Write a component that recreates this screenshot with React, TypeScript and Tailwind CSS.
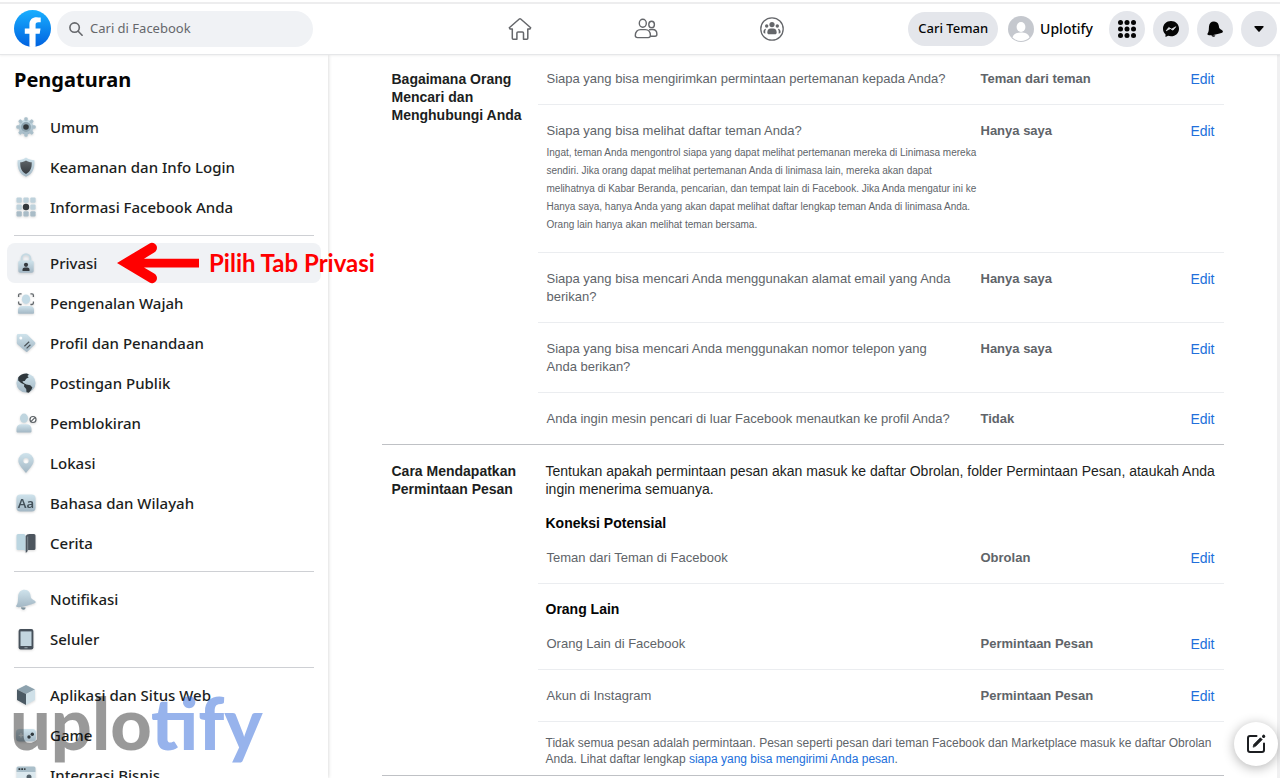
import React from "react";
import type { ReactNode } from "react";

const sans = "font-['Noto_Sans','Open_Sans',sans-serif]";

function Gradients() {
  return (
    <svg width="0" height="0" className="absolute" aria-hidden="true">
      <defs>
        <linearGradient id="fb" x1="0" y1="0" x2="0" y2="1">
          <stop offset="0" stopColor="#19afff" />
          <stop offset="1" stopColor="#0062e0" />
        </linearGradient>
        <linearGradient id="pale" x1="0" y1="0" x2="0" y2="1">
          <stop offset="0" stopColor="#cfe3ec" />
          <stop offset="1" stopColor="#a3b7c4" />
        </linearGradient>
        <linearGradient id="dark" x1="0" y1="0" x2="0" y2="1">
          <stop offset="0" stopColor="#5e6468" />
          <stop offset="1" stopColor="#353a3f" />
        </linearGradient>
      </defs>
    </svg>
  );
}

const icons: Record<string, ReactNode> = {
  gear: (
    <>
      <g fill="url(#pale)">
        <circle cx="10" cy="10" r="7.6" />
        {[0, 45, 90, 135, 180, 225, 270, 315].map((a) => (
          <rect key={a} x="8.3" y="0.3" width="3.4" height="4" rx="1.2" transform={`rotate(${a} 10 10)`} fill="#aabfca" />
        ))}
      </g>
      <circle cx="10" cy="10" r="5" fill="#8fa5b1" />
      <circle cx="10" cy="10" r="2.8" fill="#33383c" />
    </>
  ),
  shield: (
    <>
      <path d="M10 .4C7.500 2.200 4.500 3 1.600 3.200c-.5 8.300 1.600 13.600 8.400 16.600 6.800-3 8.900-8.300 8.400-16.600C15.500 3 12.500 2.200 10 .4z" fill="url(#pale)" />
      <path d="M10 3.400C8.200 4.700 6.400 5.100 4.300 5.300 4 11 5.500 14.600 10 17c4.500-2.400 6-6 5.700-11.700-2.100-.2-3.900-.6-5.700-1.900z" fill="url(#dark)" />
    </>
  ),
  grid: (
    <>
      {[0.5, 7.4, 14.3].map((y) =>
        [0.5, 7.4, 14.3].map((x) => <rect key={`${x}-${y}`} x={x} y={y} width="5.3" height="5.3" rx="1" fill={y > 10 ? "#a9bcc7" : "#bed2dc"} />)
      )}
      <circle cx="10" cy="10" r="3.200" fill="#34393d" />
    </>
  ),
  lock: (
    <>
      <path d="M5.700 9V5.500a4.300 4.300 0 0 1 8.600 0V9" fill="none" stroke="#c5d9e2" strokeWidth="2" />
      <rect x="2.300" y="7.500" width="15.400" height="12.200" rx="1.800" fill="url(#pale)" />
      <circle cx="10" cy="11.800" r="2.100" fill="#353a3f" />
      <path d="M6.500 18v-1.300c0-1.600 1-2.300 2.400-2.300h2.200c1.400 0 2.400.7 2.400 2.300V18z" fill="#353a3f" />
    </>
  ),
  face: (
    <>
      <path d="M2.600 4V2.200Q2.600.8 4 .8h1.600M14.400.8H16q1.400 0 1.400 1.400V4M2.600 8.500v1.600q0 1.400 1.400 1.400h1.600M14.400 11.500H16q1.400 0 1.400-1.400V8.500" fill="none" stroke="#63686c" strokeWidth="1.300" />
      <ellipse cx="10" cy="6.200" rx="4.100" ry="4.800" fill="#c4dbe6" />
      <path d="M2 20v-3c0-3 2-4 4.600-4h6.800c2.600 0 4.600 1 4.600 4v3q0 .8-.8.800H2.800Q2 20.800 2 20z" fill="url(#pale)" />
    </>
  ),
  tag: (
    <>
      <path d="M.8 2.400Q.8 1 2.200 1h7.600q1 0 1.700.7l7.300 7.300q1.200 1.200 0 2.400l-6.900 6.900q-1.200 1.200-2.400 0L1.600 11.500Q.8 10.800.8 9.700z" fill="url(#pale)" />
      <circle cx="4.800" cy="5" r="1.500" fill="#fff" />
      <path d="M8.400 13.300l4.800-4.500M10.600 15.400l3.800-3.600" stroke="#4b5359" strokeWidth="1.200" />
    </>
  ),
  globe: (
    <>
      <circle cx="10" cy="10" r="9.600" fill="url(#pale)" />
      <path d="M2.200 4.400C4.200 1.500 7.400.3 11 .5l2 1.300-1.700 1.300 1.500 1.200-2.600 1.400-1.500 2.200-2.300.4 1.200 1.700 2.800 1.400 3.900.9 2.100 2.300-1.200 2.500-2.300 2.700-2.400-.6-.3-3.300-2.200-2.300.3-2-3.200-1.600L2.200 7.600z" fill="#30383d" />
    </>
  ),
  block: (
    <>
      <ellipse cx="8" cy="5.200" rx="4" ry="4.600" fill="#bfd5df" />
      <path d="M.5 18.500V16c0-3.300 2-4.800 4.700-4.800h5.600c2.700 0 4.700 1.500 4.700 4.800v2.500q0 .9-.9.900H1.400q-.9 0-.9-.9z" fill="url(#pale)" />
      <circle cx="17" cy="6.500" r="3" fill="#fff" stroke="#5c6266" strokeWidth="1.200" />
      <path d="M14.900 8.600l4.200-4.200" stroke="#5c6266" strokeWidth="1.200" />
    </>
  ),
  pin: (
    <path fillRule="evenodd" d="M10 20C7.500 16.500 2.300 12 2.300 7.700a7.700 7.700 0 0 1 15.400 0C17.700 12 12.500 16.500 10 20zM10 5.100a2.700 2.700 0 1 0 0 5.400 2.700 2.700 0 0 0 0-5.400z" fill="url(#pale)" />
  ),
  aa: (
    <>
      <rect x=".4" y="1.500" width="19.200" height="17" rx="4" fill="url(#pale)" />
      <text x="10" y="14.500" textAnchor="middle" fontSize="13" fontFamily="Noto Sans" fontWeight="600" fill="#43515a">Aa</text>
    </>
  ),
  book: (
    <>
      <path d="M.5 2.500Q.5 1 2 1h5.500Q9.500 1 9.700 3v15.500Q9 17 7.500 17H2Q.5 17 .5 15.500z" fill="#bcd6e1" />
      <path d="M19.500 2.500Q19.500 1 18 1h-4.500Q10.500 1 9.700 3v16.800q1.800-.3 2.100-2.800H18q1.500 0 1.500-1.500z" fill="#4c555e" />
      <path d="M11.700 3.500V17" stroke="#7d878f" strokeWidth="1" />
    </>
  ),
  bell: (
    <>
      <path d="M5 18.200a2.300 2.300 0 0 0 4.700.3z" fill="#7e929d" />
      <path d="M1 18.100c-1.200-.6-1-1.700 0-2.700 1.300-2.300.8-5.500 1.200-8.900C2.700 3 5.200.6 8.600.7c4 .1 5.900 3 6 6.400.1 2.300 1.500 3.300 3.700 4.300 1.900.9 1.700 2.400.3 2.900C14 15.800 6 18.800 1 18.100z" fill="url(#pale)" />
    </>
  ),
  phone: (
    <>
      <rect x="2.600" y="0" width="14.800" height="20.500" rx="2" fill="#46505a" />
      <rect x="4.500" y="2.400" width="11" height="14.600" fill="#c2d5df" />
      <rect x="8.300" y="18.200" width="3.400" height="1" rx=".5" fill="#9aa7af" />
    </>
  ),
  cube: (
    <>
      <path d="M10 0l9 4.500L10 9 1 4.500z" fill="#8da2ae" />
      <path d="M1 4.500L10 9v11l-9-5z" fill="#4b5a64" />
      <path d="M19 4.500L10 9v11l9-5z" fill="#cfe0e8" />
    </>
  ),
  game: (
    <>
      <rect x="0" y="4" width="20" height="12.500" rx="3.500" fill="url(#pale)" />
      <path d="M5 8v4.600M2.700 10.300h4.600" stroke="#e9f2f6" strokeWidth="1.300" />
      <circle cx="13" cy="12" r="1.700" fill="#30383d" />
      <circle cx="16.300" cy="9.200" r="1.700" fill="#30383d" />
    </>
  ),
  browser: (
    <>
      <path d="M.5 3Q.5 1.500 2 1.500h16q1.500 0 1.500 1.500v4H.5z" fill="#aabfca" />
      <rect x=".5" y="7" width="19" height="12" fill="#dbe8ee" />
      <path d="M2.500 4.200h7" stroke="#30383d" strokeWidth="1.800" strokeDasharray="1.800 1" />
      <circle cx="13" cy="12" r="2.500" fill="#53616a" />
    </>
  ),
};

const groups: { icon: string; label: string; active?: boolean }[][] = [
  [
    { icon: "gear", label: "Umum" },
    { icon: "shield", label: "Keamanan dan Info Login" },
    { icon: "grid", label: "Informasi Facebook Anda" },
  ],
  [
    { icon: "lock", label: "Privasi", active: true },
    { icon: "face", label: "Pengenalan Wajah" },
    { icon: "tag", label: "Profil dan Penandaan" },
    { icon: "globe", label: "Postingan Publik" },
    { icon: "block", label: "Pemblokiran" },
    { icon: "pin", label: "Lokasi" },
    { icon: "aa", label: "Bahasa dan Wilayah" },
    { icon: "book", label: "Cerita" },
  ],
  [
    { icon: "bell", label: "Notifikasi" },
    { icon: "phone", label: "Seluler" },
  ],
  [
    { icon: "cube", label: "Aplikasi dan Situs Web" },
    { icon: "game", label: "Game" },
    { icon: "browser", label: "Integrasi Bisnis" },
  ],
];

function RoundButton({ label, children }: { label: string; children: ReactNode }) {
  return (
    <button aria-label={label} className="flex size-9 items-center justify-center rounded-full bg-[#e4e6eb] text-[#050505]">
      {children}
    </button>
  );
}

function Header() {
  return (
    <header className={`relative z-10 flex h-[55px] shrink-0 items-center justify-between border-b border-[#e6e7e9] bg-white pt-[3px] shadow-[0_1px_2px_rgba(0,0,0,0.06)] ${sans}`}>
      <div className="absolute inset-x-0 top-0.5 h-0.5 bg-[#ededee]" />
      <div className="flex flex-1 items-center gap-1.5 pl-3.5">
        <a href="#beranda" aria-label="Facebook">
          <svg width="37" height="37" viewBox="0 0 36 36">
            <circle cx="18" cy="18" r="18" fill="url(#fb)" />
            <path d="M25 23l.8-5H21v-3.500c0-1.400.5-2.500 2.700-2.500H26V7.400C24.700 7.200 23.300 7 22 7c-4.100 0-7 2.500-7 7v4h-4.500v5H15v12.700c1 .2 2 .3 3 .3s2-.1 3-.3V23z" fill="#fff" />
          </svg>
        </a>
        <label className="flex h-9 w-64 items-center gap-[7px] rounded-full bg-[#f0f2f5] px-3 text-[#65676b]">
          <svg width="14" height="14" viewBox="0 0 14 14" fill="none" stroke="#65676b" strokeWidth="1.600" strokeLinecap="round">
            <circle cx="5.600" cy="5.600" r="4.700" />
            <path d="M9.200 9.200l3.900 4" />
          </svg>
          <input aria-label="Cari di Facebook" placeholder="Cari di Facebook" className="min-w-0 flex-1 bg-transparent text-[13px] outline-none placeholder:text-[#65676b]" />
        </label>
      </div>
      <nav className="flex items-center gap-[102px]" aria-label="Utama">
        <a href="#beranda" aria-label="Beranda">
          <svg width="24" height="24" viewBox="0 0 24 24" fill="none" stroke="#65676b" strokeWidth="1.500" strokeLinejoin="round">
            <path d="M11.300 2q.7-.6 1.400 0l10 8.700-.8 1.300h-2.100v9.200q0 1-1 1h-3.300V16q0-1.100-1.100-1.100H10Q8.900 14.900 8.900 16v6.200H5.300q-1 0-1-1V12H2.100l-.8-1.300z" />
          </svg>
        </a>
        <a href="#teman" aria-label="Teman">
          <svg width="24" height="24" viewBox="0 0 24 24" fill="none" stroke="#65676b" strokeWidth="1.400">
            <ellipse cx="8.800" cy="6.200" rx="3.500" ry="4" />
            <path d="M1.300 18.500c0-3.700 2-5.900 5.300-5.900h4.600c3.300 0 5.200 2.200 5.200 5.900 0 1.400-.8 2.100-2.200 2.100H3.500c-1.400 0-2.200-.7-2.200-2.100z" />
            <ellipse cx="17.600" cy="7.400" rx="2.800" ry="3.200" />
            <path d="M15 12.900q1-.4 2.400-.4h1.200c2.800 0 4.300 1.800 4.300 4.800 0 1.300-.7 2-1.900 2h-4.500" />
          </svg>
        </a>
        <a href="#grup" aria-label="Grup">
          <svg width="24" height="24" viewBox="0 0 24 24" fill="#65676b">
            <circle cx="12" cy="12" r="11.200" fill="none" stroke="#65676b" strokeWidth="1.300" />
            <circle cx="12" cy="7.600" r="2.600" />
            <circle cx="6.700" cy="9" r="1.700" />
            <circle cx="17.300" cy="9" r="1.700" />
            <path d="M7.300 15.500c0-2.700 1.400-4 3.400-4h2.600c2 0 3.400 1.300 3.400 4 0 1.200-.6 1.800-1.700 1.800H9c-1.100 0-1.700-.6-1.700-1.800z" />
            <path d="M6.200 11.800c-1.900.2-2.800 1.400-2.800 3.200 0 .8.500 1.400 1.500 1.400h.5c-.4-1.700 0-3.500.8-4.600zM17.800 11.800c1.900.2 2.800 1.400 2.800 3.200 0 .8-.5 1.400-1.500 1.400h-.5c.4-1.700 0-3.500-.8-4.600z" />
          </svg>
        </a>
      </nav>
      <div className="flex flex-1 items-center justify-end gap-2 pr-[3px] font-medium text-[#050505]">
        <button className="h-[34px] rounded-full bg-[#e4e6eb] px-2.5 text-[13px]">Cari Teman</button>
        <a href="#profil" className="mr-2 ml-0.5 flex items-center gap-1.5 text-[14px]">
          <svg width="26" height="26" viewBox="0 0 26 26">
            <circle cx="13" cy="13" r="13" fill="#c5c8ce" />
            <ellipse cx="13" cy="11" rx="4.400" ry="5" fill="#fff" />
            <path d="M4.500 21.500c1-4 4.500-5 8.500-5s7.500 1 8.500 5A12.500 12.500 0 0 1 13 25a12.500 12.500 0 0 1-8.500-3.500z" fill="#fff" />
          </svg>
          Uplotify
        </a>
        <RoundButton label="Menu">
          <svg width="18" height="18" viewBox="0 0 18 18" fill="currentColor">
            {[2.500, 9, 15.500].map((y) => [2.500, 9, 15.500].map((x) => <circle key={`${x}-${y}`} cx={x} cy={y} r="2.500" />))}
          </svg>
        </RoundButton>
        <RoundButton label="Messenger">
          <svg width="18" height="18" viewBox="0 0 18 18">
            <path d="M9 1C4.400 1 1 4.300 1 8.700c0 2.300 1 4.200 2.500 5.600V17l2.600-1.200c.9.300 1.900.5 2.900.5 4.600 0 8-3.200 8-7.600S13.600 1 9 1z" fill="currentColor" />
            <path d="M4.200 10.800l2.600-3.400 2.600 1.800 4.400-2.500-2.800 3.500-2.500-1.700z" fill="#e4e6eb" stroke="#e4e6eb" strokeWidth=".7" strokeLinejoin="round" />
          </svg>
        </RoundButton>
        <RoundButton label="Notifikasi">
          <svg width="16" height="16" viewBox="0 0 20 20" fill="currentColor">
            <path d="M5.500 17.500a2.600 2.600 0 0 0 5 .6z" />
            <path d="M1.300 17.600c-1.200-.6-1-2 0-3 1.300-2.300.8-4.700 1.200-8.100C3 2.800 5.200.4 8.800.5c4 .1 6 3 6.100 6.400.1 2.300 1.300 3.300 3.500 4.300 1.900.9 1.900 3.100.4 3.600C14.500 16.300 6.300 18.600 1.300 17.600z" />
          </svg>
        </RoundButton>
        <RoundButton label="Akun">
          <svg width="10" height="6" viewBox="0 0 10 6" fill="currentColor">
            <path d="M1 0h8q1 0 .6.900L5.600 5.600q-.6.700-1.200 0L.4.900Q0 0 1 0z" />
          </svg>
        </RoundButton>
      </div>
    </header>
  );
}

function Sidebar() {
  return (
    <aside className={`relative w-[328px] shrink-0 bg-white shadow-[0_0_4px_rgba(0,0,0,0.2)] ${sans}`}>
      <h1 className="px-3.5 pt-[11px] text-[20px] leading-7 font-bold text-[#050505]">Pengaturan</h1>
      <nav className="mt-[13px] px-[7px]" aria-label="Pengaturan">
        {groups.map((items, g) => (
          <ul key={g} className={g ? "pt-2 before:mx-[7px] before:mb-[7px] before:block before:h-px before:bg-[#ced0d4]" : ""}>
            {items.map((it) => (
              <li key={it.label} className="relative">
                <a href={`#${it.icon}`} className={`flex h-10 items-center gap-3.5 rounded-lg pl-[9px] text-[15px] font-medium text-[#1c1e21] ${it.active ? "bg-[#f0f2f5]" : ""}`}>
                  <svg width="20" height="20" viewBox="0 0 20 20" className="shrink-0 overflow-visible drop-shadow-[0_1px_1px_rgba(0,0,0,0.15)]">
                    {icons[it.icon]}
                  </svg>
                  {it.label}
                </a>
                {it.active && (
                  <div className="absolute top-0 left-[110px] flex h-10 items-center gap-2.5 font-['Lato',sans-serif] text-[24px] font-bold whitespace-nowrap text-[#ff0000]">
                    <svg width="82" height="42" viewBox="0 0 82 42" aria-hidden="true">
                      <path d="M82 16.800H27L37.200 10.400A4.600 4.600 0 0 0 32.600 1.400L0 21l32.600 19.600a4.600 4.600 0 0 0 4.600-9L27 25.600H82z" fill="#ff0000" />
                    </svg>
                    Pilih Tab Privasi
                  </div>
                )}
              </li>
            ))}
          </ul>
        ))}
      </nav>
    </aside>
  );
}

type RowProps = { text: string; value: string; note?: string[]; last?: boolean };

function Row({ text, value, note, last }: RowProps) {
  return (
    <li className={`flex px-[9px] pt-[17px] pb-4 text-[13px] text-[#606469] ${last ? "" : "border-b border-[#ebedf0]"}`}>
      <div className="w-[434px] shrink-0">
        <p className="pr-6">{text}</p>
        {note && (
          <p className="mt-1 mb-0.5 text-[10px] whitespace-nowrap">
            {note.map((line) => (
              <span key={line} className="block">{line}</span>
            ))}
          </p>
        )}
      </div>
      <strong className="flex-1">{value}</strong>
      <a href="#edit" className="text-[14px] text-[#216fdb]">Edit</a>
    </li>
  );
}

function Section({ title, children }: { title: string; children: ReactNode }) {
  return (
    <section className="flex border-b border-[#bfc1c5] pl-2.5">
      <h2 className="w-[146px] shrink-0 pt-[17px] pr-3 font-bold text-[#1c1e21]">{title}</h2>
      <div className="min-w-0 flex-1">{children}</div>
    </section>
  );
}

const friendListNote = [
  "Ingat, teman Anda mengontrol siapa yang dapat melihat pertemanan mereka di Linimasa mereka",
  "sendiri. Jika orang dapat melihat pertemanan Anda di linimasa lain, mereka akan dapat",
  "melihatnya di Kabar Beranda, pencarian, dan tempat lain di Facebook. Jika Anda mengatur ini ke",
  "Hanya saya, hanya Anda yang akan dapat melihat daftar lengkap teman Anda di linimasa Anda.",
  "Orang lain hanya akan melihat teman bersama.",
];

export default function App() {
  return (
    <div className="relative flex h-screen flex-col overflow-hidden bg-white">
      <Gradients />
      <Header />
      <div className="flex min-h-0 flex-1">
        <Sidebar />
        <main className="min-w-0 flex-1 border-r-[3px] border-[#f0f0f1] font-['Liberation_Sans',Arial,sans-serif] text-[14px] leading-[18px]">
          <div className="mx-auto -mt-0.5 max-w-[842px]">
            <Section title="Bagaimana Orang Mencari dan Menghubungi Anda">
              <ul>
                <Row text="Siapa yang bisa mengirimkan permintaan pertemanan kepada Anda?" value="Teman dari teman" />
                <Row text="Siapa yang bisa melihat daftar teman Anda?" value="Hanya saya" note={friendListNote} />
                <Row text="Siapa yang bisa mencari Anda menggunakan alamat email yang Anda berikan?" value="Hanya saya" />
                <Row text="Siapa yang bisa mencari Anda menggunakan nomor telepon yang Anda berikan?" value="Hanya saya" />
                <Row text="Anda ingin mesin pencari di luar Facebook menautkan ke profil Anda?" value="Tidak" last />
              </ul>
            </Section>
            <Section title="Cara Mendapatkan Permintaan Pesan">
              <p className="pt-[17px] pl-2 text-[#1c1e21]">
                Tentukan apakah permintaan pesan akan masuk ke daftar Obrolan, folder Permintaan Pesan, ataukah Anda ingin menerima semuanya.
              </p>
              <h3 className="pt-4 pl-2 text-[#050505] font-bold">Koneksi Potensial</h3>
              <ul>
                <Row text="Teman dari Teman di Facebook" value="Obrolan" />
              </ul>
              <h3 className="pt-4 pl-2 text-[#050505] font-bold">Orang Lain</h3>
              <ul>
                <Row text="Orang Lain di Facebook" value="Permintaan Pesan" />
                <Row text="Akun di Instagram" value="Permintaan Pesan" />
              </ul>
              <p className="pt-[13px] pb-2 pl-2 text-[12px] leading-4 text-[#606469]">
                Tidak semua pesan adalah permintaan. Pesan seperti pesan dari teman Facebook dan Marketplace masuk ke daftar Obrolan Anda. Lihat daftar lengkap <a href="#pengirim" className="text-[#216fdb]">siapa yang bisa mengirimi Anda pesan</a>.
              </p>
            </Section>
          </div>
        </main>
      </div>
      <div className="pointer-events-none absolute bottom-4 left-2.5 font-['Lato',sans-serif] text-[72px] leading-[80px] font-black">
        <span className="text-black/40">uplo</span>
        <span className="text-[#2f68da]/50">tify</span>
      </div>
      <button aria-label="Pesan baru" className="absolute right-0.5 bottom-3 flex size-11 items-center justify-center rounded-full bg-white text-[#1c1e21] shadow-[0_2px_12px_rgba(0,0,0,0.3)]">
        <svg width="20" height="20" viewBox="0 0 20 20" fill="none" stroke="currentColor" strokeWidth="2" strokeLinecap="round">
          <path d="M10.500 2H4Q2 2 2 4v12q0 2 2 2h12q2 0 2-2V9.500" />
          <path d="M7.200 12.800l.6-2.400 6.600-6.600 1.800 1.800-6.600 6.600z" fill="currentColor" strokeWidth=".8" strokeLinejoin="round" />
          <path d="M17.600 2.400l.1-.1" strokeWidth="3.200" />
        </svg>
      </button>
    </div>
  );
}
